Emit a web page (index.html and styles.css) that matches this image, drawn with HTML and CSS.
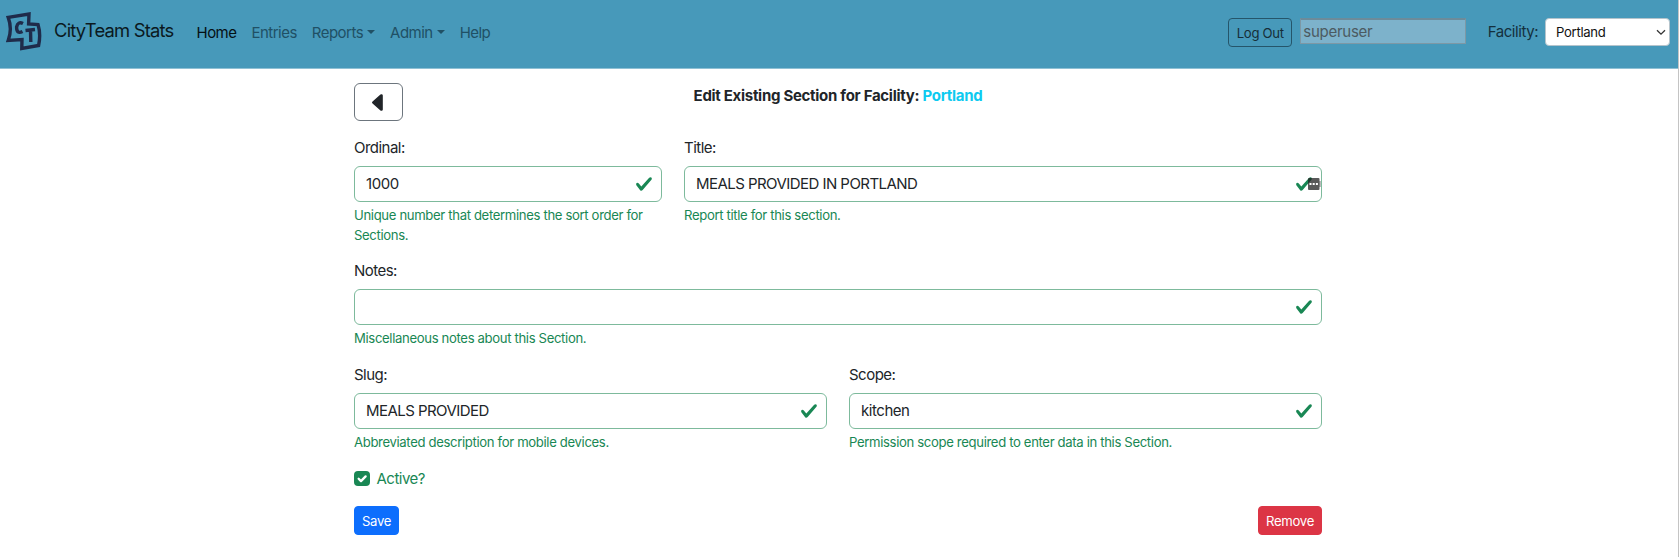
FILE: index.html
```html
<!DOCTYPE html>
<html lang="en">
<head>
<meta charset="utf-8">
<title>CityTeam Stats</title>
<link rel="stylesheet" href="styles.css">
</head>
<body>
<header class="navbar">
  <svg class="logo" viewBox="0 0 36 40" fill="none" stroke="#1f2b4a" stroke-width="3.4">
    <path d="M2.2 5.4 L23 2 L22.6 12 L32 12.6 Q35 22 32.6 33.5 L15.800 36.5 L16 27.500 L2.2 28.5 Q6.5 17 2.2 5.4 Z"/>
    <path d="M17 11.500 Q12 9 10.600 15 Q10.500 22.500 16.500 19.500"/>
    <path d="M19.500 18.500 L29 17.500 M24.500 18.500 L24.800 30"/>
  </svg>
  <span class="brand">CityTeam Stats</span>
  <nav class="nav">
    <a class="nav-link active">Home</a>
    <a class="nav-link">Entries</a>
    <a class="nav-link dropdown">Reports</a>
    <a class="nav-link dropdown">Admin</a>
    <a class="nav-link">Help</a>
  </nav>
  <button class="btn btn-logout">Log Out</button>
  <input class="user" value="superuser" disabled>
  <label class="facility-label">Facility:</label>
  <div class="facility"><span>Portland</span>
    <svg class="chevron" viewBox="0 0 10 7" fill="none" stroke="#333" stroke-width="1.3"><path d="M1 1.2 L5 5.2 L9 1.2"/></svg>
  </div>
</header>
<main class="container">
  <div class="heading">
    <button class="btn-back"><svg viewBox="0 0 16 16" fill="#212529"><path d="m3.860 8.753 5.482 4.796c.646.566 1.658.106 1.658-.753V3.204a1 1 0 0 0-1.659-.753l-5.480 4.796a1 1 0 0 0 0 1.506z"/></svg></button>
    <h1 class="title">Edit Existing Section for Facility: <span class="info">Portland</span></h1>
  </div>
  <form>
    <div class="row row-first">
      <div class="group">
        <label class="label">Ordinal:</label>
        <div class="control"><span>1000</span><svg class="check" viewBox="0 0 8 8" fill="#198754"><path d="M2.3 6.730.6 4.530c-.4-1.040.460-1.400 1.100-.8l1.100 1.400 3.400-3.800c.6-.630 1.600-.270 1.200.7l-4 4.600c-.430.5-.8.4-1.100.1z"/></svg></div>
        <div class="feedback">Unique number that determines the sort order for Sections.</div>
      </div>
      <div class="group">
        <label class="label">Title:</label>
        <div class="control"><span class="caps">MEALS PROVIDED IN PORTLAND</span><svg class="check" viewBox="0 0 8 8" fill="#198754"><path d="M2.3 6.730.6 4.530c-.4-1.040.460-1.400 1.100-.8l1.100 1.400 3.400-3.800c.6-.630 1.600-.270 1.200.7l-4 4.600c-.430.5-.8.4-1.100.1z"/></svg>
          <svg class="autofill" viewBox="0 0 13 12"><rect x="11" y="3" width="2" height="6" fill="#bbb"/><rect width="11.5" height="12" rx="1" fill="#222" fill-opacity=".75"/><path d="M1.500 5h2v2h-2zM4.700 5h2v2h-2zM7.900 5h2v2h-2z" fill="#fff"/></svg></div>
        <div class="feedback">Report title for this section.</div>
      </div>
    </div>
    <div class="row row-notes">
      <div class="group">
        <label class="label">Notes:</label>
        <div class="control"><span></span><svg class="check" viewBox="0 0 8 8" fill="#198754"><path d="M2.3 6.730.6 4.530c-.4-1.040.460-1.400 1.100-.8l1.100 1.400 3.400-3.800c.6-.630 1.600-.270 1.200.7l-4 4.600c-.430.5-.8.4-1.100.1z"/></svg></div>
        <div class="feedback">Miscellaneous notes about this Section.</div>
      </div>
    </div>
    <div class="row row-half">
      <div class="group">
        <label class="label">Slug:</label>
        <div class="control"><span class="caps">MEALS PROVIDED</span><svg class="check" viewBox="0 0 8 8" fill="#198754"><path d="M2.3 6.730.6 4.530c-.4-1.040.460-1.400 1.100-.8l1.100 1.400 3.400-3.800c.6-.630 1.600-.270 1.200.7l-4 4.600c-.430.5-.8.4-1.100.1z"/></svg></div>
        <div class="feedback">Abbreviated description for mobile devices.</div>
      </div>
      <div class="group">
        <label class="label">Scope:</label>
        <div class="control"><span>kitchen</span><svg class="check" viewBox="0 0 8 8" fill="#198754"><path d="M2.3 6.730.6 4.530c-.4-1.040.460-1.400 1.100-.8l1.100 1.400 3.400-3.800c.6-.630 1.600-.270 1.200.7l-4 4.600c-.430.5-.8.4-1.100.1z"/></svg></div>
        <div class="feedback">Permission scope required to enter data in this Section.</div>
      </div>
    </div>
    <label class="active-row"><span class="checkbox"><svg viewBox="0 0 20 20" fill="none" stroke="#fff" stroke-width="3" stroke-linecap="round" stroke-linejoin="round"><path d="m6 10 3 3 6-6"/></svg></span>Active?</label>
    <div class="actions">
      <button class="btn btn-primary" type="button">Save</button>
      <button class="btn btn-danger" type="button">Remove</button>
    </div>
  </form>
</main>
</body>
</html>
```
FILE: styles.css
```css
* { box-sizing: border-box; }
body {
  margin: 0;
  height: 557px;
  overflow: hidden;
  border-right: 1px solid #c4c4c4;
  background: #fff;
  color: #212529;
  font: 15px/22.5px Inter, "Liberation Sans", sans-serif;
  letter-spacing: -0.52px;
}
button, input { font-family: inherit; letter-spacing: inherit; }
.navbar {
  display: flex;
  align-items: flex-start;
  height: 69px;
  padding-left: 5px;
  padding-right: 8px;
  background: #4799ba;
  border-bottom: 1px solid #8fc0d4;
}
.logo { width: 36px; height: 40px; margin: 12px 0 0 0.5px; }
.brand { margin: 16px 0 0 12.5px; width: 120px; font-size: 18.4px; line-height: 28px; color: #0b191f; white-space: nowrap; letter-spacing: -0.8px; }
.nav { display: flex; gap: 15px; margin: 22px 0 0 22.5px; }
.nav-link { color: #205065; white-space: nowrap; }
.nav-link.active { color: #051015; }
.dropdown::after {
  content: "";
  display: inline-block;
  margin-left: 4px;
  vertical-align: 4px;
  border-top: 4.5px solid;
  border-left: 4.5px solid transparent;
  border-right: 4.5px solid transparent;
}
.btn { height: 29px; padding: 0 6px; border: 1px solid; border-radius: 4px; font-size: 13.13px; line-height: 20px; white-space: nowrap; letter-spacing: -0.3px; }
.btn-logout { width: 64px; margin: 18px 8px 0 auto; background: none; border-color: #25556a; color: #162e38; }
.user { width: 166px; height: 26px; margin-top: 18px; padding: 0 2px; border: 1px solid #7d98a5; border-top: 2px solid #6c8b9a; background: #7db2cb; color: #4c5a61; font-size: 15px; letter-spacing: -0.25px; }
.facility-label { margin: 21px 8px 0 22px; color: #14303d; letter-spacing: -0.45px; }
.facility {
  display: flex;
  align-items: center;
  justify-content: space-between;
  width: 125px;
  height: 28px;
  margin-top: 18px;
  padding: 0 3px 0 10px;
  border: 1px solid #b5c4cc;
  border-radius: 4px;
  background: #fff;
  color: #111;
  font-size: 13.13px;
  letter-spacing: -0.3px;
}
.chevron { width: 10px; height: 7px; }
.navbar .btn-logout { margin-right: 8px; }
.navbar .facility-label { margin-left: 21.5px; margin-right: 7px; }
.container { width: 968px; margin-left: 354px; padding-top: 14px; }
.heading { display: grid; grid-template-columns: 49px 1fr 49px; height: 38px; }
.btn-back { display: grid; place-items: center; width: 49px; height: 38px; padding: 0; border: 1px solid #6c757d; border-radius: 6px; background: #fff; }
.btn-back svg { width: 23px; height: 23px; margin-top: 1px; }
.title { margin: 2px 0 0; font-size: 15px; line-height: 22.5px; font-weight: 650; text-align: center; white-space: nowrap; letter-spacing: -0.29px; }
.info { color: #0dcaf0; }
.row { display: grid; column-gap: 22px; }
.row-first { grid-template-columns: 308px 638px; height: 123px; margin-top: 16px; }
.row-notes { height: 104px; }
.row-half { grid-template-columns: 473px 473px; height: 104px; }
.label { display: block; height: 22px; margin-bottom: 7px; }
.control { position: relative; display: flex; align-items: center; justify-content: space-between; height: 36px; padding: 0 8px 0 11px; border: 1px solid #7dba9c; border-radius: 6px; }
.control span { padding-top: 1px; letter-spacing: -0.45px; }
.control .caps { letter-spacing: -0.55px; }
.check { width: 18px; height: 18px; }
.autofill { position: absolute; right: 0; top: 11px; width: 13px; height: 12px; }
.feedback { margin-top: 4px; font-size: 13.13px; line-height: 19.7px; color: #198754; letter-spacing: -0.35px; }
.active-row { display: flex; align-items: center; gap: 7px; height: 22px; color: #198754; }
.checkbox { width: 15.5px; height: 15.5px; margin-top: -1px; border-radius: 4px; background: #198754; }
.checkbox svg { display: block; width: 100%; height: 100%; }
.actions { display: flex; justify-content: space-between; margin-top: 16px; }
.btn-primary { width: 45px; background: #0d6efd; border-color: #0d6efd; color: #fff; }
.btn-danger { width: 64px; background: #dc3545; border-color: #dc3545; color: #fff; }
```
